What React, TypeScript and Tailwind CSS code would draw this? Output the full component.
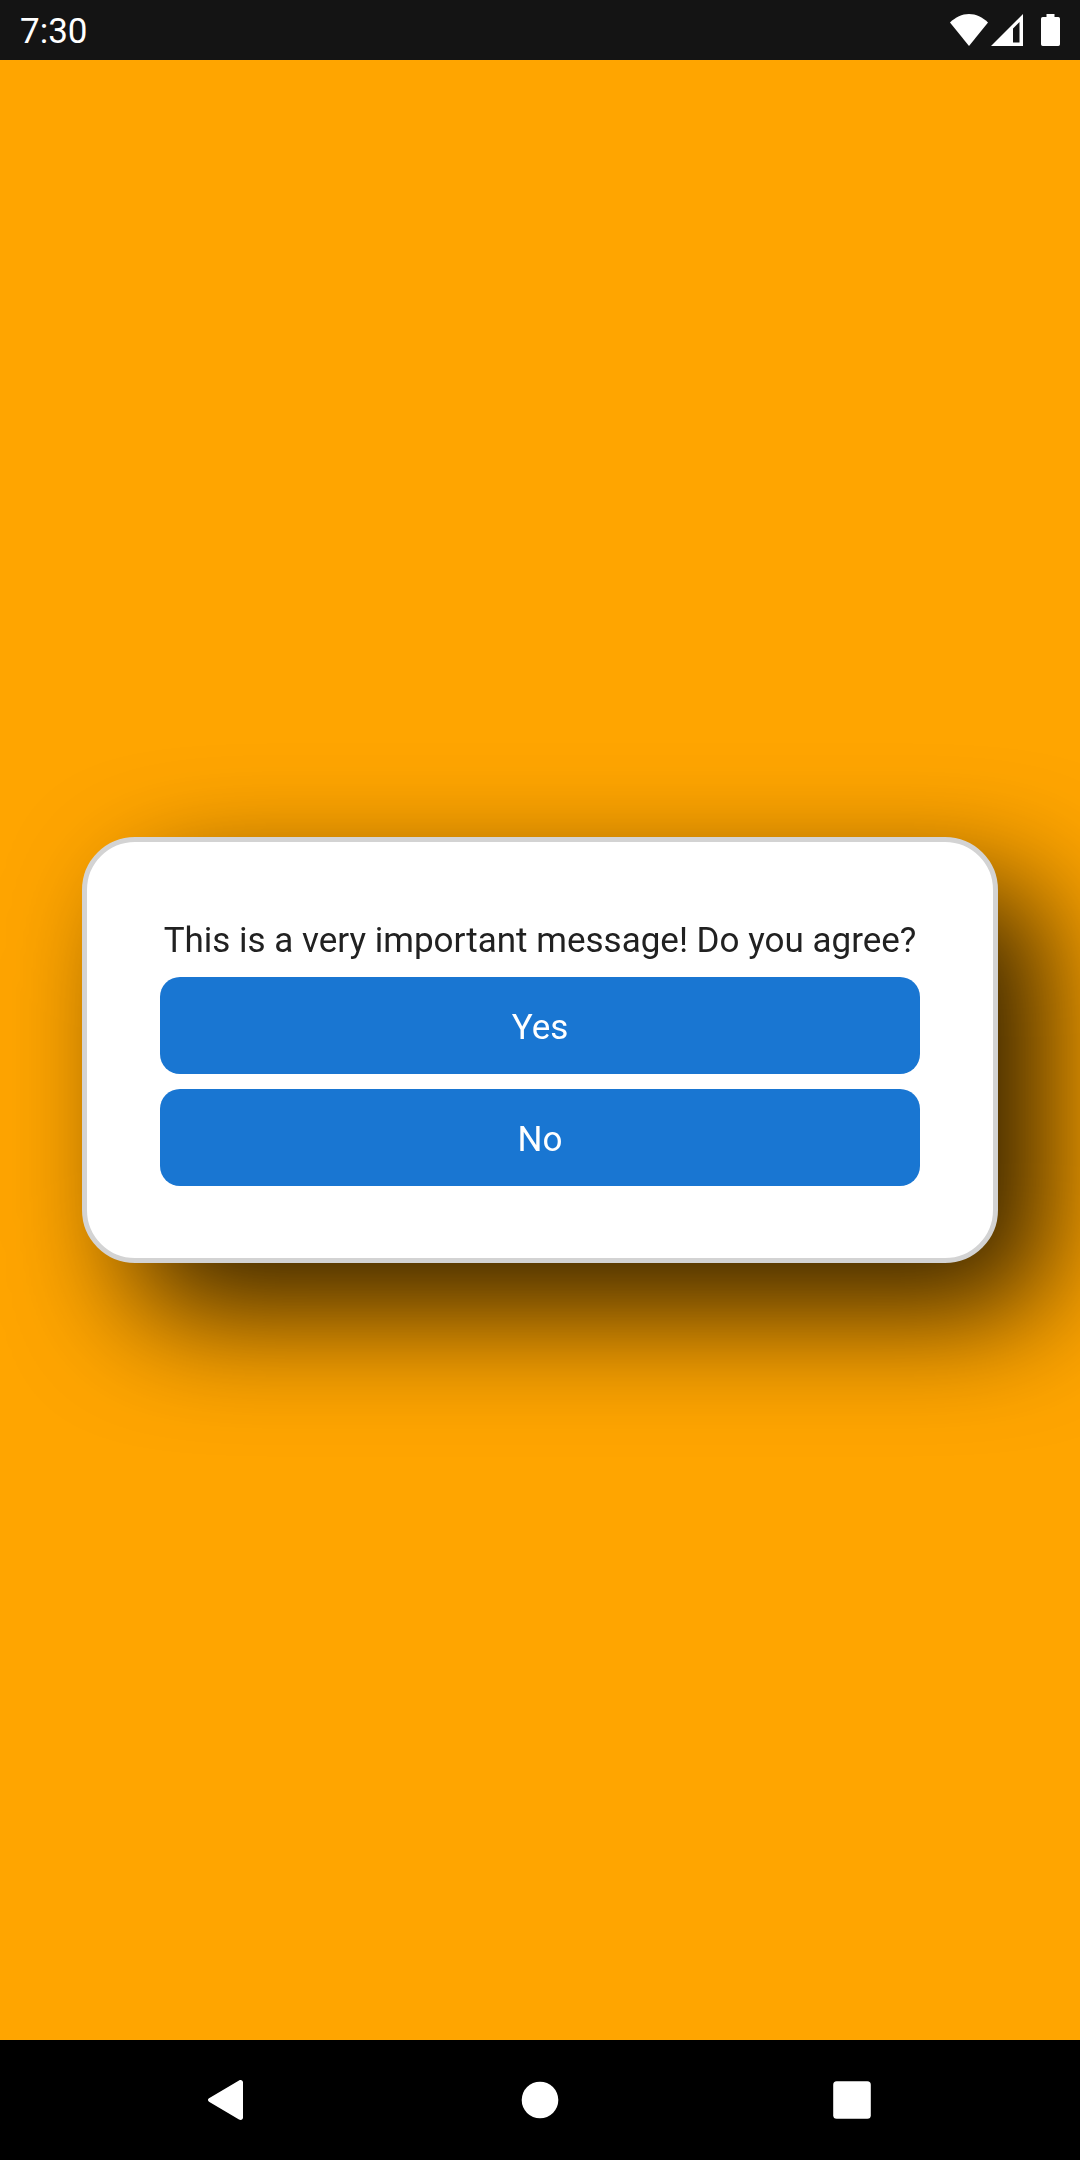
// src/App.tsx
import { useState } from 'react'

function StatusBar() {
  return (
    <header className="flex h-15 shrink-0 items-center justify-between bg-[#141414] px-5 text-white">
      <time className="pt-1 text-[35px] leading-10">7:30</time>
      <div className="flex items-center">
        {/* wifi */}
        <svg width="38" height="32" viewBox="0 0 38 32" fill="currentColor" className="mr-[3px]">
          <path d="M19 32 0 8.500C5.500 3.200 12 0 19 0s13.500 3.200 19 8.500Z" />
        </svg>
        {/* mobile signal */}
        <svg width="32" height="32" viewBox="0 0 32 32" fill="currentColor" className="mr-[18px]">
          <path fillRule="evenodd" d="M32 0v32H0ZM28.500 8l-6.500 6.500v14h6.500Z" />
        </svg>
        {/* battery */}
        <svg width="19" height="32" viewBox="0 0 19 32" fill="currentColor">
          <path d="M5.500 0h8v3h3.800A1.700 1.700 0 0 1 19 4.700v25.600a1.700 1.700 0 0 1-1.700 1.700H1.700A1.700 1.700 0 0 1 0 30.300V4.700A1.700 1.700 0 0 1 1.700 3h3.800Z" />
        </svg>
      </div>
    </header>
  )
}

function NavBar() {
  return (
    <nav className="flex h-30 shrink-0 items-stretch bg-black px-18 text-white">
      <button type="button" aria-label="Back" className="flex flex-1 items-center justify-center">
        <svg width="48" height="48" viewBox="0 0 48 48" fill="currentColor">
          <path d="M5 22.300 35 4.500c2-1.200 4 0 4 2v35c0 2-2 3.200-4 2L5 25.700c-1.400-.900-1.400-2.500 0-3.400Z" />
        </svg>
      </button>
      <button type="button" aria-label="Home" className="flex flex-1 items-center justify-center">
        <svg width="48" height="48" viewBox="0 0 48 48" fill="currentColor">
          <circle cx="24" cy="24" r="18.300" />
        </svg>
      </button>
      <button type="button" aria-label="Recent apps" className="flex flex-1 items-center justify-center">
        <svg width="48" height="48" viewBox="0 0 48 48" fill="currentColor">
          <rect x="5.200" y="5.200" width="37.600" height="37.600" rx="3.500" />
        </svg>
      </button>
    </nav>
  )
}

export default function App() {
  const [, setAnswer] = useState<string | null>(null)

  return (
    <div className="flex min-h-screen flex-col overflow-hidden bg-[#ffa500] font-[Roboto,sans-serif]">
      <StatusBar />

      <main className="flex flex-1 items-center px-[82px]">
        <section
          role="dialog"
          aria-labelledby="message"
          className="flex w-full flex-col gap-[15px] rounded-[53px] border-5 border-[#d3d3d3] bg-white px-[73px] py-[72px] [filter:drop-shadow(50px_50px_60px_rgba(0,0,0,0.8))]"
        >
          <p id="message" className="pt-1.5 text-center text-[35px] leading-[42px] text-[#212121]">
            This is a very important message! Do you agree?
          </p>
          {['Yes', 'No'].map(label => (
            <button
              key={label}
              type="button"
              onClick={() => setAnswer(label)}
              className="h-[97px] rounded-[20px] bg-[#1976d2] pt-1 text-[35px] leading-[42px] text-white"
            >
              {label}
            </button>
          ))}
        </section>
      </main>

      <NavBar />
    </div>
  )
}
